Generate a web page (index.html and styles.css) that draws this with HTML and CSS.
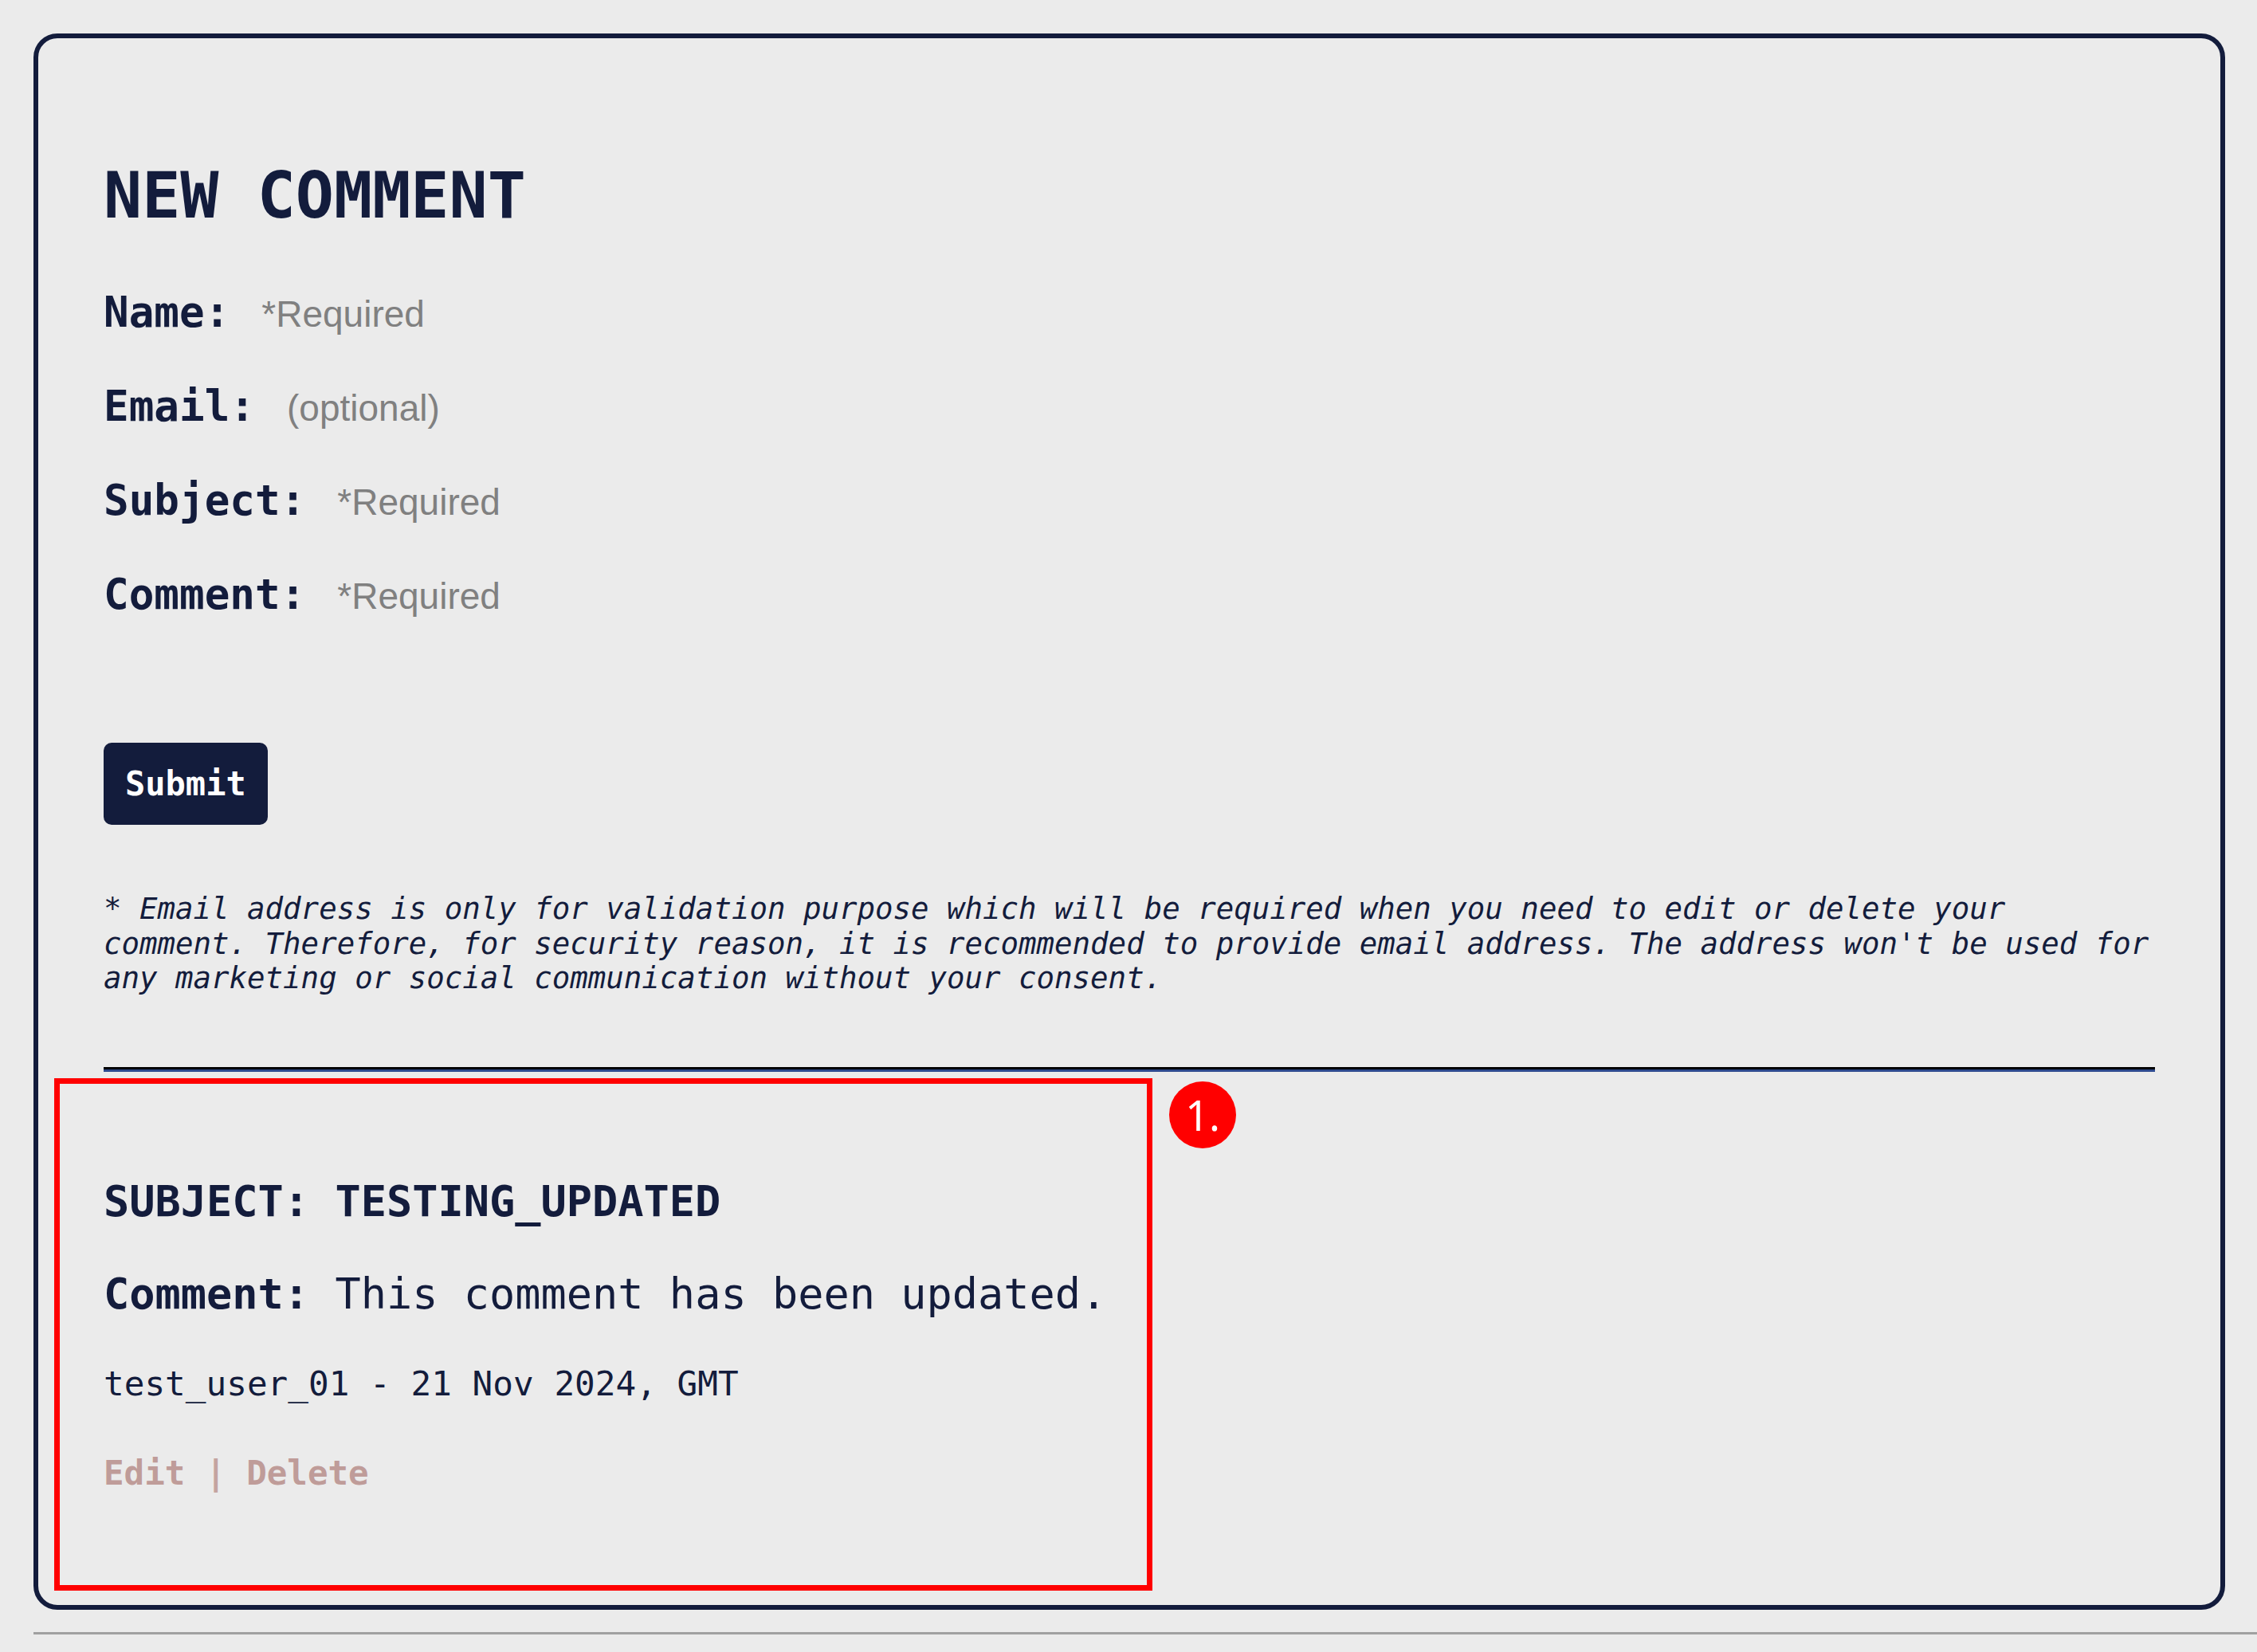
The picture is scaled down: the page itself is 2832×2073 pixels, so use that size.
FILE: index.html
```html
<!DOCTYPE html>
<html lang="en">
<head>
<meta charset="utf-8">
<title>New Comment</title>
<link rel="stylesheet" href="styles.css">
</head>
<body>
<div class="card">
  <h2 class="title">NEW COMMENT</h2>
  <form class="form">
    <div class="row"><label class="label" for="f-name">Name:</label><input class="field" id="f-name" type="text" placeholder="*Required"></div>
    <div class="row"><label class="label" for="f-email">Email:</label><input class="field" id="f-email" type="text" placeholder="(optional)"></div>
    <div class="row"><label class="label" for="f-subject">Subject:</label><input class="field" id="f-subject" type="text" placeholder="*Required"></div>
    <div class="row"><label class="label" for="f-comment">Comment:</label><input class="field" id="f-comment" type="text" placeholder="*Required"></div>
  </form>
  <button class="submit" type="button">Submit</button>
  <p class="note">* Email address is only for validation purpose which will be required when you need to edit or delete your comment. Therefore, for security reason, it is recommended to provide email address. The address won't be used for any marketing or social communication without your consent.</p>
  <hr class="divider">
  <section class="entry">
    <h3 class="entry-subject">SUBJECT: TESTING_UPDATED</h3>
    <p class="entry-text"><strong>Comment:</strong> This comment has been updated.</p>
    <p class="entry-meta">test_user_01 - 21 Nov 2024, GMT</p>
    <p class="entry-actions"><a class="act">Edit</a> <span class="sep">|</span> <a class="act">Delete</a></p>
    <div class="mark"></div>
    <div class="badge">1.</div>
  </section>
</div>
<div class="foot"></div>
</body>
</html>
```

FILE: styles.css
```css
html, body {
  margin: 0;
  padding: 0;
  background: #ebebeb;
}
body {
  padding-top: 42px;
  font-family: "DejaVu Sans Mono", monospace;
  color: #131c3c;
}
.card {
  box-sizing: border-box;
  width: 2750px;
  margin: 0 40px 0 42px;
  border: 6px solid #131c3c;
  border-radius: 30px;
  padding: 151px 82px 141px 82px;
}
.title {
  margin: 0;
  font-size: 80px;
  font-weight: bold;
  line-height: normal;
}
.form {
  margin-top: 69px;
  display: flex;
  flex-direction: column;
  gap: 57px;
}
.row {
  display: flex;
  align-items: baseline;
  gap: 40px;
  height: 61px;
}
.label {
  font-size: 52.6px;
  font-weight: bold;
  line-height: normal;
}
.field {
  border: none;
  background: transparent;
  padding: 0;
  margin: 0;
  outline: none;
  width: 700px;
  font-family: "Liberation Sans", Arial, sans-serif;
  font-size: 46px;
  color: #131c3c;
}
.field::placeholder {
  color: #808080;
  opacity: 1;
}
.submit {
  display: block;
  margin-top: 156px;
  padding: 27px 27px;
  border: none;
  border-radius: 10px;
  background: #131c3c;
  color: #ffffff;
  font-family: "DejaVu Sans Mono", monospace;
  font-size: 42px;
  font-weight: bold;
  line-height: normal;
}
.note {
  margin: 84px 0 0 0;
  font-size: 37.4px;
  font-style: italic;
  line-height: 43.5px;
}
.divider {
  margin: 89px 0 0 0;
  height: 0;
  border: none;
  border-top: 3px solid #000000;
  border-bottom: 3px solid #2e4a8f;
}
.entry {
  position: relative;
  padding-top: 131px;
}
.entry-subject {
  margin: 0;
  font-size: 53.6px;
  font-weight: bold;
  line-height: normal;
}
.entry-text {
  margin: 53px 0 0 0;
  font-size: 53.6px;
  line-height: normal;
}
.entry-meta {
  margin: 56px 0 0 0;
  font-size: 42.7px;
  line-height: normal;
}
.entry-actions {
  margin: 63px 0 0 0;
  font-size: 42.5px;
  font-weight: bold;
  line-height: normal;
  color: #bf9c99;
}
.act {
  color: #bf9c99;
}
.sep {
  color: #c4a4a0;
}
.mark {
  position: absolute;
  left: -62px;
  top: 8px;
  width: 1378px;
  height: 643px;
  box-sizing: border-box;
  border: 7px solid #ff0000;
}
.badge {
  position: absolute;
  left: 1337px;
  top: 12px;
  width: 84px;
  height: 84px;
  border-radius: 50%;
  background: #ff0000;
  color: #ffffff;
  font-family: "Noto Sans", "Open Sans", sans-serif;
  font-size: 52px;
  line-height: 84px;
  text-align: center;
}
.foot {
  margin: 28px 0 0 42px;
  border-top: 3px solid #a0a0a0;
  height: 40px;
}
```
